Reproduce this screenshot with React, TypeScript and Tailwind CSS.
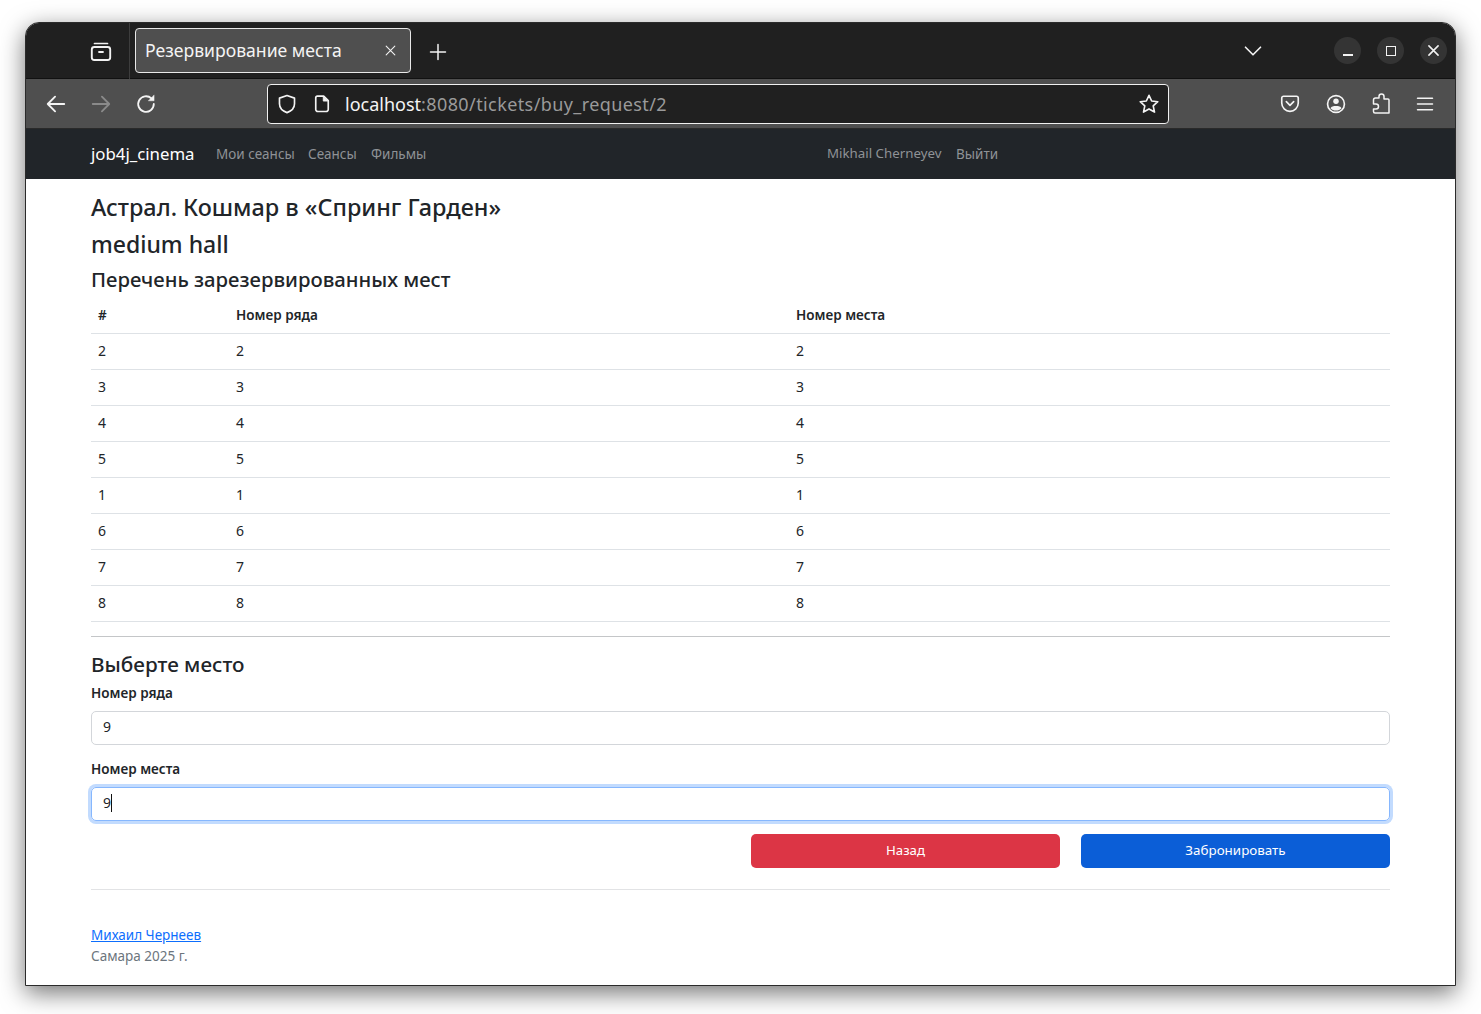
import React from 'react';

const rows = [2, 3, 4, 5, 1, 6, 7, 8];
const font = { fontFamily: '"Noto Sans", sans-serif' };

const Icon = ({ className, children }: { className?: string; children: React.ReactNode }) => (
  <svg viewBox="0 0 24 24" fill="none" stroke="currentColor" strokeWidth="2" strokeLinecap="round" strokeLinejoin="round" className={className}>
    {children}
  </svg>
);

const WindowButton = ({ children }: { children: React.ReactNode }) => (
  <div className="w-[27px] h-[27px] rounded-full bg-[#343434] flex items-center justify-center text-[#f2f2f2]">{children}</div>
);

const TitleBar = () => (
  <div className="h-[56px] bg-[#202020] flex items-stretch border-b border-[#111111] shrink-0">
    <div className="w-[103px] flex items-center justify-end pr-[16px] pt-[1px]">
      <Icon className="w-[24px] h-[24px] text-[#f2f2f2]">
        <path d="M5.5 4.5h13" strokeWidth="1.7" />
        <rect x="2.8" y="8" width="18.4" height="13" rx="2.5" strokeWidth="1.9" />
        <path d="M10 13h4" strokeWidth="1.8" />
      </Icon>
    </div>
    <div className="w-px bg-[#3d3d3d] h-[56px]" />
    <div className="ml-[5px] mt-[5px] w-[276px] h-[45px] rounded-[4px] border border-[#e8e8e8] bg-[#4f4f4f] flex items-center pl-[9px] pr-[13px] text-[#f4f4f4] text-[17.6px]">
      <span className="flex-1 pb-[1px]">Резервирование места</span>
      <Icon className="w-[13px] h-[13px]">
        <path d="M4 4l16 16M20 4L4 20" strokeWidth="2" />
      </Icon>
    </div>
    <div className="ml-[18px] flex items-center pt-[2px]">
      <Icon className="w-[18px] h-[18px] text-[#f2f2f2]">
        <path d="M12 2v20M2 12h20" strokeWidth="2" />
      </Icon>
    </div>
    <div className="flex-1" />
    <div className="flex items-center pr-[8px] gap-[16px]">
      <Icon className="w-[20px] h-[20px] text-[#f2f2f2] mr-[55px]">
        <path d="M3 7.5l9 9 9-9" strokeWidth="2" />
      </Icon>
      <WindowButton>
        <div className="w-[10px] h-[2px] bg-[#f2f2f2] mt-[9px]" />
      </WindowButton>
      <WindowButton>
        <div className="w-[10px] h-[10px] border-[1.5px] border-[#f2f2f2]" />
      </WindowButton>
      <WindowButton>
        <Icon className="w-[11px] h-[11px]">
          <path d="M2 2l20 20M22 2L2 22" strokeWidth="3.4" />
        </Icon>
      </WindowButton>
    </div>
  </div>
);

const ToolBar = () => (
  <div className="h-[50px] bg-[#4f4f4f] flex items-center border-b border-[#2a2a2a] shrink-0 text-[#f4f4f4]">
    <Icon className="w-[22px] h-[22px] ml-[19px]">
      <path d="M21 12H3M11 4l-8 8 8 8" strokeWidth="2" />
    </Icon>
    <Icon className="w-[22px] h-[22px] ml-[23px] text-[#8a8a8a]">
      <path d="M3 12h18M13 4l8 8-8 8" strokeWidth="2" />
    </Icon>
    <Icon className="w-[22px] h-[22px] ml-[23px]">
      <path d="M20.5 12a8.5 8.5 0 1 1-2.6-6.1" strokeWidth="2" />
      <path d="M20.8 2.5v6h-6z" fill="currentColor" strokeWidth="0.5" />
    </Icon>
    <div className="ml-[110px] w-[902px] h-[40px] rounded-[4px] border border-[#f0f0f0] bg-[#202020] flex items-center pl-[8px] pr-[8px]">
      <Icon className="w-[22px] h-[22px]">
        <path d="M12 2.8l8.2 2.8v6.2c0 4.8-3.6 8-8.2 9.6-4.6-1.6-8.2-4.8-8.200-9.600V5.600z" strokeWidth="1.8" />
      </Icon>
      <Icon className="w-[20px] h-[20px] ml-[14px]">
        <path d="M6.500 2.500h7.500l5.500 5.500v10.500a2.500 2.500 0 0 1-2.500 2.500H7a2.500 2.500 0 0 1-2.500-2.500v-14a2 2 0 0 1 2-2z" strokeWidth="2" />
        <path d="M13.500 3v5.500H19" fill="currentColor" strokeWidth="1" />
      </Icon>
      <div className="ml-[13px] pt-[1px] text-[18px] flex-1">
        <span className="text-[#f4f4f4]">localhost</span>
        <span className="text-[#9a9a9a] tracking-[0.4px]">:8080/tickets/buy_request/2</span>
      </div>
      <Icon className="w-[22px] h-[22px]">
        <path d="M12 2.500l2.900 6.200 6.700.8-5 4.600 1.400 6.700-6-3.400-6 3.400 1.400-6.700-5-4.600 6.700-.8z" strokeWidth="1.800" />
      </Icon>
    </div>
    <Icon className="w-[22px] h-[22px] ml-[110px]">
      <path d="M5 3.500h14a2 2 0 0 1 2 2v5.500a9 9 0 0 1-18 0V5.500a2 2 0 0 1 2-2z" strokeWidth="1.800" />
      <path d="M8 9.500l4 4 4-4" strokeWidth="1.800" />
    </Icon>
    <Icon className="w-[22px] h-[22px] ml-[24px]">
      <circle cx="12" cy="12" r="9.200" strokeWidth="1.800" />
      <circle cx="12" cy="9" r="3" fill="currentColor" stroke="none" />
      <path d="M6 16.500c1-1.800 3-2.300 6-2.300s5 .5 6 2.300c-1.500 1.700-3.500 2.500-6 2.500s-4.500-.8-6-2.500z" fill="currentColor" stroke="none" />
    </Icon>
    <Icon className="w-[24px] h-[24px] ml-[22px]">
      <path d="M10 6V4.500a2.500 2.500 0 0 1 5 0V7h4a1 1 0 0 1 1 1v13H6a1.500 1.500 0 0 1-1.500-1.500V17H7a2.500 2.500 0 0 0 0-5H4.500V8A2 2 0 0 1 6.500 6z" strokeWidth="1.500" />
    </Icon>
    <Icon className="w-[20px] h-[20px] ml-[22px]">
      <path d="M3 5h18M3 12h18M3 19h18" strokeWidth="1.800" />
    </Icon>
  </div>
);

const NavBar = () => (
  <div className="h-[50px] bg-[#212529] flex items-center pl-[65px] shrink-0">
    <span className="text-[16.8px] text-white w-[125px] leading-[24px]">job4j_cinema</span>
    <span className="text-[13.5px] text-[#8f9296] w-[92px]">Мои сеансы</span>
    <span className="text-[13.5px] text-[#8f9296] w-[63px]">Сеансы</span>
    <span className="text-[13.5px] text-[#8f9296] w-[456px]">Фильмы</span>
    <span className="text-[13.3px] text-[#8f9296] w-[129px]">Mikhail Cherneyev</span>
    <span className="text-[13.5px] text-[#8f9296]">Выйти</span>
  </div>
);

const Field = ({ label, value, focused }: { label: string; value: string; focused?: boolean }) => (
  <div>
    <div className="text-[13.5px] font-semibold leading-[21px] text-[#212529]">{label}</div>
    <div className={focused
      ? 'mt-[7px] h-[34px] rounded-[5px] border border-[#86b7fe] shadow-[0_0_0_3px_#c2dbfe] flex items-center px-[11px] pb-[2px] text-[14px] text-[#212529]'
      : 'mt-[7px] h-[34px] rounded-[5px] border border-[#d3d6da] flex items-center px-[11px] pb-[2px] text-[14px] text-[#212529]'}>
      {value}
      {focused && <div className="w-px h-[18px] bg-[#111111]" />}
    </div>
  </div>
);

const App = () => (
  <div className="w-[1481px] h-[1014px] bg-white overflow-hidden pt-[22px] pl-[25px]" style={font}>
    <div className="w-[1431px] h-[964px] rounded-t-[14px] overflow-hidden border border-[#2b2b2b] flex flex-col bg-white shadow-[0_7px_24px_rgba(0,0,0,0.55)]">
      <TitleBar />
      <ToolBar />
      <NavBar />
      <div className="flex-1 pl-[65px] pr-[65px] text-[#212529]">
        <h1 className="text-[23.4px] font-medium leading-[38px] mt-[9px]">Астрал. Кошмар в «Спринг Гарден»</h1>
        <h2 className="text-[23px] font-medium leading-[37px]">medium hall</h2>
        <h3 className="text-[20.3px] font-medium leading-[32px]">Перечень зарезервированных мест</h3>
        <table className="w-full table-fixed text-[14px] mt-[2px]">
          <colgroup>
            <col className="w-[138px]" />
            <col className="w-[560px]" />
            <col />
          </colgroup>
          <thead>
            <tr className="h-[36px] border-b border-[#dee2e6] text-left text-[13.5px]">
              <th className="px-[7px] font-semibold">#</th>
              <th className="px-[7px] font-semibold">Номер ряда</th>
              <th className="px-[7px] font-semibold">Номер места</th>
            </tr>
          </thead>
          <tbody>
            {rows.map((row) => (
              <tr key={row} className="h-[36px] border-b border-[#dee2e6]">
                <td className="px-[7px] pb-[1px]">{row}</td>
                <td className="px-[7px] pb-[1px]">{row}</td>
                <td className="px-[7px] pb-[1px]">{row}</td>
              </tr>
            ))}
          </tbody>
        </table>
        <div className="mt-[14px] h-px bg-[#c4c6c8]" />
        <h3 className="text-[20.7px] font-medium leading-[32px] mt-[11px]">Выберте место</h3>
        <div className="mt-[3px] flex flex-col gap-[14px]">
          <Field label="Номер ряда" value="9" />
          <Field label="Номер места" value="9" focused />
        </div>
        <div className="mt-[13px] flex justify-end gap-[21px]">
          <button className="w-[309px] h-[34px] rounded-[5px] bg-[#dc3545] text-white text-[13.2px]">Назад</button>
          <button className="w-[309px] h-[34px] rounded-[5px] bg-[#0b5ed7] text-white text-[13.4px]">Забронировать</button>
        </div>
        <div className="mt-[21px] h-px bg-[#e2e3e5]" />
        <div className="mt-[35px] text-[13.5px] leading-[21px]">
          <a className="text-[#0d6efd] underline block">Михаил Чернеев</a>
          <span className="text-[#6c757d]">Самара 2025 г.</span>
        </div>
      </div>
    </div>
  </div>
);

export default App;
